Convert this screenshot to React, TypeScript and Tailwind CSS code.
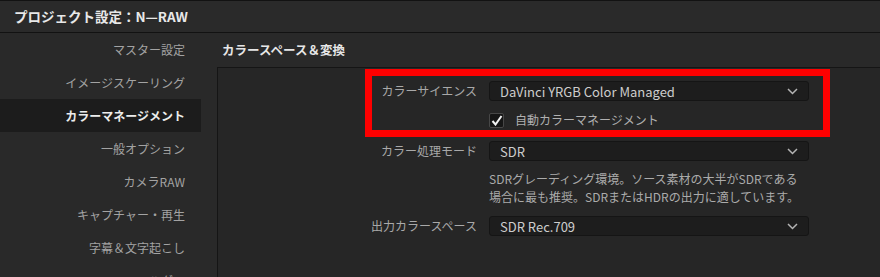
const menu = [
  "マスター設定",
  "イメージスケーリング",
  "カラーマネージメント",
  "一般オプション",
  "カメラRAW",
  "キャプチャー・再生",
  "字幕＆文字起こし",
  "フォルダー",
];

function Chevron() {
  return (
    <svg width="11" height="7" viewBox="0 0 11 7" className="shrink-0">
      <polyline points="1,1 5.5,5.5 10,1" fill="none" stroke="#b4b4b4" strokeWidth="1.5" />
    </svg>
  );
}

function Select({ value }: { value: string }) {
  return (
    <div className="ml-[12px] flex h-[20px] w-[320px] items-center justify-between rounded-[3px] border border-[#151515] bg-[#1d1d1d] pl-[10px] pr-[10px] text-[13px] text-[#cdcdcd]">
      <span className="leading-none">{value}</span>
      <Chevron />
    </div>
  );
}

function Row({ label, value, className }: { label: string; value: string; className?: string }) {
  return (
    <div className={"flex items-center " + (className ?? "")}>
      <div className="w-[259px] text-right text-[12px] text-[#a9a9a9]">{label}</div>
      <Select value={value} />
    </div>
  );
}

export default function App() {
  return (
    <div
      className="flex h-[277px] w-[880px] flex-col overflow-hidden bg-[#292929]"
      style={{ fontFamily: '"Noto Sans CJK JP", "Noto Sans", sans-serif' }}
    >
      <div className="flex h-[33px] shrink-0 items-center border-t border-b border-[#121212] bg-[#2a2a2a] px-[14px] text-[13.5px] font-bold text-[#e8e8e8]">
        プロジェクト設定：N—RAW
      </div>

      <div className="flex flex-1">
        <div className="w-[217px] shrink-0">
          {menu.map((item) => {
            const active = item === "カラーマネージメント";
            return (
              <div
                key={item}
                className={
                  "flex h-[33px] w-[201px] items-center justify-end pr-[16px] text-[12px] " +
                  (active ? "bg-[#1c1c1c] font-bold text-[#ececec]" : "text-[#a3a3a3]")
                }
              >
                {item}
              </div>
            );
          })}
        </div>

        <div className="flex flex-1 flex-col">
          <div className="flex h-[34px] items-center pl-[5px] text-[12.5px] font-bold text-[#e6e6e6]">
            カラースペース＆変換
          </div>
          <div className="relative flex-1 border-t border-l border-[#151515] bg-[#262626] pt-[13px]">
            <Row label="カラーサイエンス" value="DaVinci YRGB Color Managed" />

            <div className="mt-[10px] flex items-center">
              <div className="ml-[271px] flex h-[15px] w-[15px] items-center justify-center rounded-[2px] border border-[#474747] bg-[#161616]">
                <svg width="12" height="11" viewBox="0 0 12 11">
                  <polyline points="1.5,6 4.5,9.5 10.5,1" fill="none" stroke="#f2f2f2" strokeWidth="2" />
                </svg>
              </div>
              <span className="ml-[11px] text-[12px] text-[#b0b0b0]">自動カラーマネージメント</span>
            </div>

            <Row label="カラー処理モード" value="SDR" className="mt-[12px]" />

            <div className="ml-[271px] mt-[9px] text-[12px] leading-[18px] text-[#ababab]">
              SDRグレーディング環境。ソース素材の大半がSDRである
              <br />
              場合に最も推奨。SDRまたはHDRの出力に適しています。
            </div>

            <Row label="出力カラースペース" value="SDR Rec.709" className="mt-[10px]" />

            <div className="absolute left-[147px] top-[1px] h-[68px] w-[465px] border-[7px] border-[#fe0000]" />
          </div>
        </div>
      </div>
    </div>
  );
}
